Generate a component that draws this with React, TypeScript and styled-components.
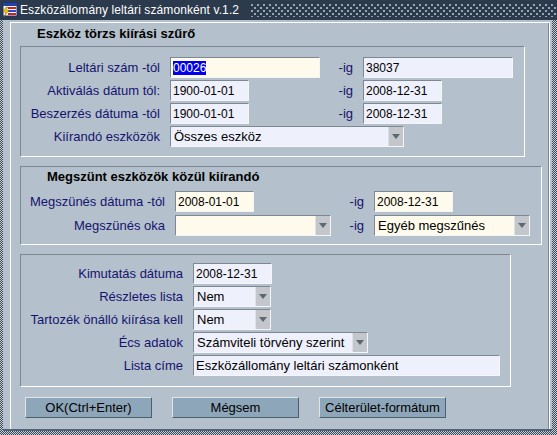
import styled, { createGlobalStyle } from 'styled-components';

const GlobalStyle = createGlobalStyle`
  html, body { margin: 0; padding: 0; }
  body {
    font-family: "Liberation Sans", Arial, sans-serif;
    background: #b4c0cb;
  }
`;

const Window = styled.div`
  width: 557px;
  height: 435px;
  display: flex;
  flex-direction: column;
  overflow: hidden;
  background: repeating-conic-gradient(#3a4656 0 25%, #c9d0d8 0 50%) 0 0 / 2px 2px;
`;

const TitleBar = styled.div`
  height: 20px;
  flex: none;
  display: flex;
  align-items: center;
  gap: 2px;
  padding-left: 2px;
  background: #2b3a4d;
`;

const TitleText = styled.span`
  color: #fff;
  font-size: 12px;
  letter-spacing: 0.1px;
  white-space: nowrap;
  padding-right: 10px;
`;

const TitleDots = styled.div`
  flex: 1;
  align-self: stretch;
  margin: 4px 0 3px;
  background-image:
    radial-gradient(circle at 1px 1px, #9aa5b1 1px, transparent 1.4px),
    radial-gradient(circle at 1px 1px, #9aa5b1 1px, transparent 1.4px);
  background-size: 6px 6px;
  background-position: 0 0, 3px 3px;
`;

const Body = styled.div`
  flex: 1;
  display: flex;
  margin: 0 5px 4px 3px;
  padding: 2px 2px 0 7px;
  background: #b4c0cb;
  border-bottom: 2px solid #52627a;
`;

const Client = styled.div`
  flex: 1;
  display: flex;
  flex-direction: column;
  padding-top: 4px;
  border-top: 1px solid #fff;
  border-left: 1px solid #fff;
  border-right: 1px solid #fff;
  box-shadow: inset -1px 0 #7f8a96;
`;

const SectionTitle = styled.div<{ $inset: number; $gap: number }>`
  font-size: 13px;
  font-weight: bold;
  color: #000;
  line-height: 14px;
  padding-left: ${({ $inset }) => $inset}px;
  margin-bottom: ${({ $gap }) => $gap}px;
`;

const Group = styled.div<{ $width: number; $pad: string }>`
  box-sizing: border-box;
  width: ${({ $width }) => $width}px;
  margin-left: 9px;
  margin-bottom: 9px;
  padding: ${({ $pad }) => $pad};
  border: 1px solid;
  border-color: #7c8792 #fff #fff #7c8792;
`;

const FormGrid = styled.div<{ $cols: string; $rowGap: number }>`
  display: grid;
  grid-template-columns: ${({ $cols }) => $cols};
  grid-auto-rows: 21px;
  column-gap: 10px;
  row-gap: ${({ $rowGap }) => $rowGap}px;
  align-items: center;
`;

const Label = styled.span`
  font-size: 13px;
  color: #141470;
  text-align: right;
  white-space: nowrap;
`;

const Field = styled.div<{ $w: number; $tone: 'cream' | 'ice'; $num?: boolean; $span?: string }>`
  box-sizing: border-box;
  width: ${({ $w }) => $w}px;
  height: 21px;
  justify-self: start;
  grid-column: ${({ $span }) => $span || 'auto'};
  display: flex;
  align-items: center;
  padding-left: 2px;
  border: 1px solid;
  border-color: #7d8893 #f4f6f8 #f4f6f8 #7d8893;
  background: ${({ $tone }) => ($tone === 'cream' ? '#fffbec' : '#eef0fc')};
  font-size: ${({ $num }) => ($num ? '12px' : '13px')};
  color: #000;
  white-space: nowrap;
  overflow: hidden;
`;

const Selected = styled.span`
  background: #0000ee;
  color: #fff;
`;

const Value = styled.span`
  flex: 1;
  padding-left: 3px;
  overflow: hidden;
`;

const Arrow = styled.span`
  flex: none;
  align-self: stretch;
  width: 14px;
  display: flex;
  align-items: center;
  justify-content: center;
  background: #c3c7cc;
  border-left: 1px solid #dfe2e5;
`;

const ButtonRow = styled.div`
  display: flex;
  gap: 20px;
  padding-left: 14px;
  margin-top: 1px;
`;

const Button = styled.button`
  width: 127px;
  height: 21px;
  padding: 0;
  background: #8ea6b9;
  border: 1px solid;
  border-color: #dde4ea #4f5e6c #4f5e6c #dde4ea;
  font-family: "Liberation Sans", Arial, sans-serif;
  font-size: 13px;
  color: #000;
`;

const AppIcon = () => (
  <svg width="16" height="16" viewBox="0 0 16 16">
    <rect x="1" y="1" width="14" height="13" fill="#fff" stroke="#1c2c6c" />
    <rect x="1" y="1" width="14" height="3" fill="#2040b0" />
    <rect x="6" y="5" width="8" height="2" fill="#d02020" />
    <rect x="6" y="8" width="8" height="2" fill="#2050d0" />
    <rect x="6" y="11" width="8" height="2" fill="#d02020" />
    <path d="M4 5 L1 10 L4 10 L2 15 L7 8 L4 8 L6 5 Z" fill="#ffd000" stroke="#806000" strokeWidth="0.5" />
  </svg>
);

const Dropdown = ({ w, tone, value, span }: { w: number; tone: 'cream' | 'ice'; value: string; span?: string }) => (
  <Field $w={w} $tone={tone} $span={span} style={{ paddingLeft: 0 }}>
    <Value>{value}</Value>
    <Arrow>
      <svg width="8" height="5" viewBox="0 0 8 5">
        <path d="M0 0 H8 L4 5 Z" fill="#5d6873" />
      </svg>
    </Arrow>
  </Field>
);

const App = () => (
  <>
    <GlobalStyle />
    <Window>
      <TitleBar>
        <AppIcon />
        <TitleText>Eszközállomány leltári számonként v.1.2</TitleText>
        <TitleDots />
      </TitleBar>
      <Body>
        <Client>
          <SectionTitle $inset={26} $gap={5}>Eszköz törzs kiírási szűrő</SectionTitle>
          <Group $width={505} $pad="10px 0 9px 0">
            <FormGrid $cols="139px 150px 23px 150px" $rowGap={2}>
              <Label>Leltári szám -tól</Label>
              <Field $w={150} $tone="cream" $num>
                <Selected>00026</Selected>
              </Field>
              <Label>-ig</Label>
              <Field $w={150} $tone="ice" $num>38037</Field>

              <Label>Aktiválás dátum tól:</Label>
              <Field $w={79} $tone="ice" $num>1900-01-01</Field>
              <Label>-ig</Label>
              <Field $w={79} $tone="ice" $num>2008-12-31</Field>

              <Label>Beszerzés dátuma -tól</Label>
              <Field $w={79} $tone="ice" $num>1900-01-01</Field>
              <Label>-ig</Label>
              <Field $w={79} $tone="ice" $num>2008-12-31</Field>

              <Label>Kiírandó eszközök</Label>
              <Dropdown w={234} tone="ice" value="Összes eszköz" span="2 / 5" />
            </FormGrid>
          </Group>

          <Group $width={522} $pad="3px 0 8px 0">
            <SectionTitle $inset={26} $gap={7}>Megszünt eszközök közül kiírandó</SectionTitle>
            <FormGrid $cols="144px 156px 23px 156px" $rowGap={3}>
              <Label>Megszünés dátuma -tól</Label>
              <Field $w={79} $tone="cream" $num>2008-01-01</Field>
              <Label>-ig</Label>
              <Field $w={79} $tone="cream" $num>2008-12-31</Field>

              <Label>Megszünés oka</Label>
              <Dropdown w={156} tone="cream" value="" />
              <Label>-ig</Label>
              <Dropdown w={156} tone="cream" value="Egyéb megszűnés" />
            </FormGrid>
          </Group>

          <Group $width={491} $pad="8px 0 10px 0">
            <FormGrid $cols="162px 307px" $rowGap={2}>
              <Label>Kimutatás dátuma</Label>
              <Field $w={79} $tone="ice" $num>2008-12-31</Field>

              <Label>Részletes lista</Label>
              <Dropdown w={78} tone="ice" value="Nem" />

              <Label>Tartozék önálló kiírása kell</Label>
              <Dropdown w={78} tone="ice" value="Nem" />

              <Label>Écs adatok</Label>
              <Dropdown w={175} tone="ice" value="Számviteli törvény szerint" />

              <Label>Lista címe</Label>
              <Field $w={307} $tone="ice">Eszközállomány leltári számonként</Field>
            </FormGrid>
          </Group>

          <ButtonRow>
            <Button>OK(Ctrl+Enter)</Button>
            <Button>Mégsem</Button>
            <Button>Célterület-formátum</Button>
          </ButtonRow>
        </Client>
      </Body>
    </Window>
  </>
);

export default App;
